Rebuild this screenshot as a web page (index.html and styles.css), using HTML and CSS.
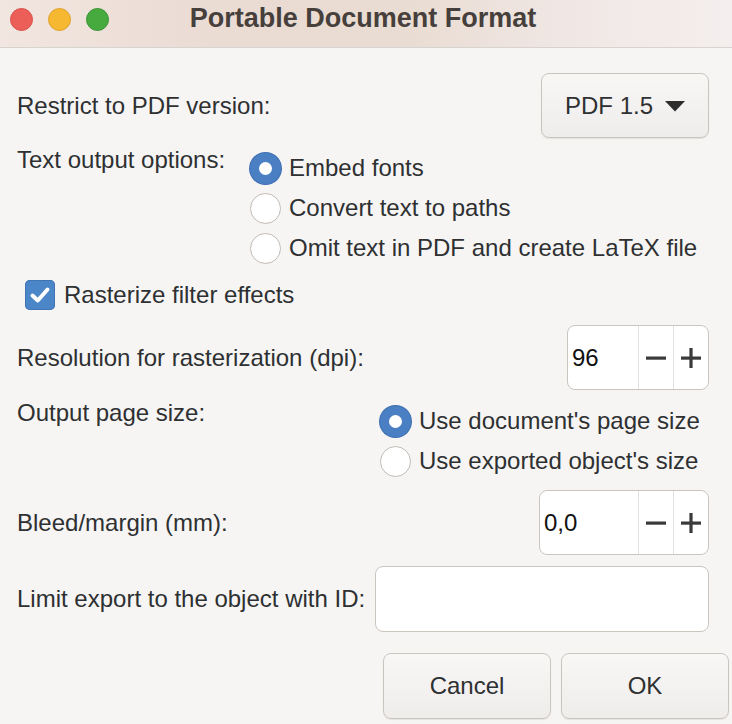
FILE: index.html
```html
<!DOCTYPE html>
<html lang="en">
<head>
<meta charset="utf-8">
<title>Portable Document Format</title>
<link rel="stylesheet" href="styles.css">
</head>
<body>
<div class="window">
  <div class="titlebar">
    <div class="lights">
      <span class="light red"></span>
      <span class="light yellow"></span>
      <span class="light green"></span>
    </div>
    <div class="title">Portable Document Format</div>
    <div></div>
  </div>
  <div class="content">
    <div class="row row-version">
      <span class="label">Restrict to PDF version:</span>
      <button class="btn dropdown">PDF 1.5
        <svg class="caret" width="20" height="11" viewBox="0 0 20 11"><path d="M0 0 H20 L10 10.5 Z" fill="#2d2d2d"/></svg>
      </button>
    </div>
    <div class="row row-text">
      <span class="label label-text">Text output options:</span>
      <div class="radios">
        <div class="radio-row"><span class="radio on"></span><span>Embed fonts</span></div>
        <div class="radio-row"><span class="radio"></span><span>Convert text to paths</span></div>
        <div class="radio-row"><span class="radio"></span><span>Omit text in PDF and create LaTeX file</span></div>
      </div>
    </div>
    <div class="row row-check">
      <span class="checkbox">
        <svg width="30" height="30" viewBox="0 0 30 30"><path d="M7.5 15.5 L12.8 20.5 L22.5 9.5" fill="none" stroke="#fff" stroke-width="4" stroke-linecap="round" stroke-linejoin="round"/></svg>
      </span>
      <span>Rasterize filter effects</span>
    </div>
    <div class="row row-res">
      <span class="label">Resolution for rasterization (dpi):</span>
      <div class="spin spin-res">
        <span class="spin-value">96</span>
        <span class="spin-btn"><svg width="20" height="20" viewBox="0 0 20 20"><rect x="0" y="8.5" width="20" height="3.2" fill="#3a3a3a"/></svg></span>
        <span class="spin-btn"><svg width="20" height="20" viewBox="0 0 20 20"><rect x="0" y="8.5" width="20" height="3.2" fill="#3a3a3a"/><rect x="8.4" y="0" width="3.2" height="20" fill="#3a3a3a"/></svg></span>
      </div>
    </div>
    <div class="row row-page">
      <span class="label label-page">Output page size:</span>
      <div class="radios">
        <div class="radio-row"><span class="radio on"></span><span>Use document's page size</span></div>
        <div class="radio-row"><span class="radio"></span><span>Use exported object's size</span></div>
      </div>
    </div>
    <div class="row row-bleed">
      <span class="label">Bleed/margin (mm):</span>
      <div class="spin spin-bleed">
        <span class="spin-value">0,0</span>
        <span class="spin-btn"><svg width="20" height="20" viewBox="0 0 20 20"><rect x="0" y="8.5" width="20" height="3.2" fill="#3a3a3a"/></svg></span>
        <span class="spin-btn"><svg width="20" height="20" viewBox="0 0 20 20"><rect x="0" y="8.5" width="20" height="3.2" fill="#3a3a3a"/><rect x="8.4" y="0" width="3.2" height="20" fill="#3a3a3a"/></svg></span>
      </div>
    </div>
    <div class="row row-limit">
      <span class="label">Limit export to the object with ID:</span>
      <div class="entry"></div>
    </div>
    <div class="row row-buttons">
      <button class="btn action">Cancel</button>
      <button class="btn action">OK</button>
    </div>
  </div>
</div>
</body>
</html>
```
FILE: styles.css
```css
html, body {
  margin: 0;
  padding: 0;
  background: #f6f5f4;
}

.window {
  width: 732px;
  height: 724px;
  background: #f6f5f4;
  font-family: "Liberation Sans", Arial, sans-serif;
  font-size: 24px;
  color: #2e3032;
  overflow: hidden;
}

.titlebar {
  height: 47px;
  border-bottom: 1px solid #d9d3cf;
  background: linear-gradient(90deg, #f2e6e0 0%, #eadbd3 30%, #e9dcd2 55%, #f1e8e6 80%, #f4eeee 100%);
  display: grid;
  grid-template-columns: 1fr auto 1fr;
  align-items: start;
}

.lights {
  display: flex;
  gap: 15px;
  padding: 8px 0 0 10px;
}

.light {
  width: 23px;
  height: 23px;
  border-radius: 50%;
  box-sizing: border-box;
}
.red { background: #ec5f58; border: 1px solid #d9514b; }
.yellow { background: #f6b731; border: 1px solid #dfa12a; }
.green { background: #47aa3f; border: 1px solid #3c9536; }

.title {
  font-weight: bold;
  font-size: 27px;
  color: #463f3c;
  padding-top: 3px;
  margin-right: 6px;
}

.content {
  display: flex;
  flex-direction: column;
  padding: 25px 23px 0 17px;
}

.row {
  display: flex;
  align-items: center;
  justify-content: space-between;
}

.label { line-height: 24px; }

.btn {
  font-family: inherit;
  font-size: 24px;
  color: #2e3032;
  background: linear-gradient(180deg, #f8f7f6 0%, #efedeb 100%);
  border: 1px solid #cbc5c0;
  border-radius: 8px;
  box-shadow: 0 1px 1px rgba(0,0,0,0.08);
  padding: 0;
  margin: 0;
}

.row-version { height: 65px; }

.dropdown {
  width: 168px;
  height: 65px;
  display: flex;
  align-items: center;
  justify-content: space-between;
  padding: 0 23px 0 23px;
}
.caret { margin-top: 2px; }

.row-text {
  margin-top: 10px;
  align-items: flex-start;
  justify-content: flex-start;
}
.label-text { flex: 0 0 233px; }

.radios { display: flex; flex-direction: column; }

.radio-row {
  height: 40px;
  display: flex;
  align-items: center;
  gap: 8px;
  line-height: 24px;
}

.radio {
  width: 31px;
  height: 31px;
  border-radius: 50%;
  box-sizing: border-box;
  background: #fff;
  border: 1.5px solid #c2bbb5;
  flex: 0 0 31px;
}
.radio.on {
  border: 9px solid #4a7fc3;
  box-shadow: 0 0 0 1px #3f70b0;
}

.row-check {
  margin-top: 7px;
  height: 40px;
  justify-content: flex-start;
  padding-left: 8px;
  gap: 9px;
}

.checkbox {
  width: 30px;
  height: 30px;
  border-radius: 5px;
  background: #4a86c8;
  box-shadow: inset 0 0 0 1px #3f75b3;
  display: flex;
}

.row-res { margin-top: 10px; height: 65px; }

.spin {
  height: 65px;
  box-sizing: border-box;
  background: #fff;
  border: 1px solid #cbc5c0;
  border-radius: 8px;
  display: flex;
  overflow: hidden;
  color: #111;
}
.spin-res { width: 142px; }
.spin-bleed { width: 170px; }

.spin-value {
  flex: 1;
  display: flex;
  align-items: center;
  padding-left: 4px;
}

.spin-btn {
  width: 34px;
  border-left: 1px solid #e4e0dc;
  display: flex;
  align-items: center;
  justify-content: center;
}

.row-page {
  margin-top: 11px;
  align-items: flex-start;
  justify-content: flex-start;
}
.label-page { flex: 0 0 363px; }

.row-bleed { margin-top: 9px; height: 65px; }

.row-limit { margin-top: 11px; height: 66px; }

.entry {
  width: 334px;
  height: 66px;
  box-sizing: border-box;
  background: #fff;
  border: 1px solid #cbc5c0;
  border-radius: 8px;
}

.row-buttons {
  margin-top: 21px;
  justify-content: flex-end;
  gap: 10px;
  margin-right: -20px;
}

.action {
  width: 168px;
  height: 66px;
}
```
